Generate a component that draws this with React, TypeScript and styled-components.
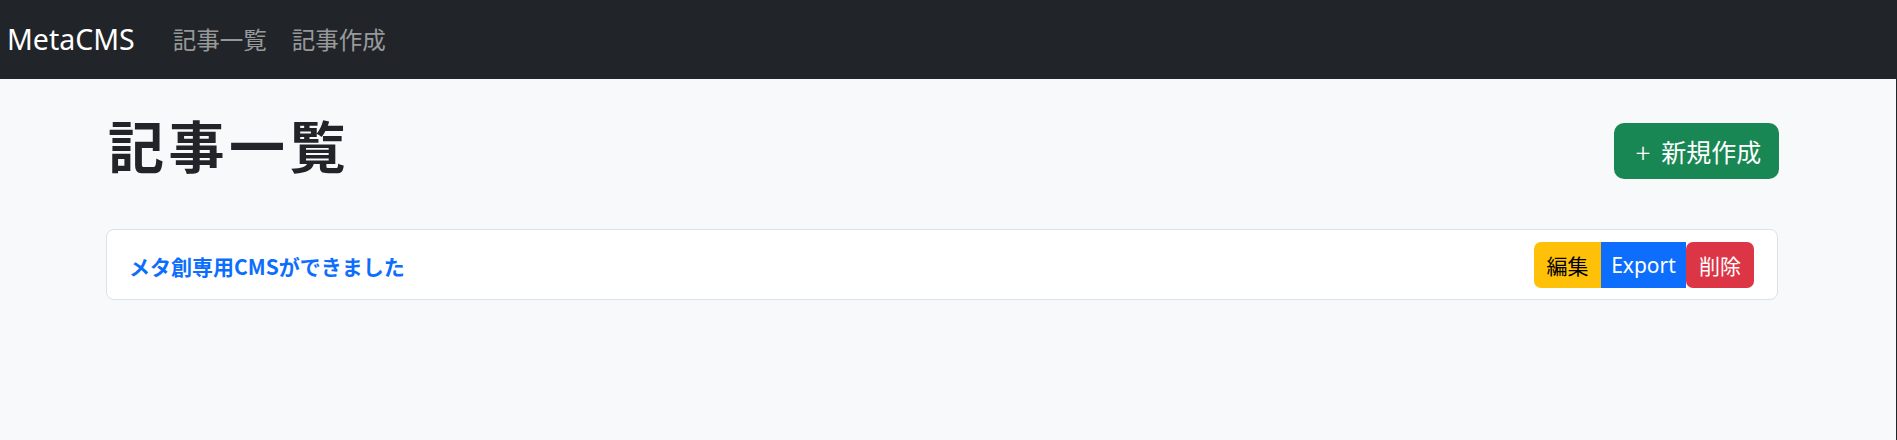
import React from "react";
import styled, { createGlobalStyle } from "styled-components";

const GlobalStyle = createGlobalStyle`
  html, body {
    margin: 0;
    padding: 0;
    background: #212529;
  }
  body {
    font-family: "Noto Sans", "Noto Sans CJK JP", sans-serif;
    color: #212529;
  }
  * { box-sizing: border-box; }
`;

const Page = styled.div`
  min-height: 100vh;
  display: flex;
  flex-direction: column;
`;

const NavBar = styled.nav`
  height: 79px;
  background: #212529;
  display: flex;
  align-items: center;
  padding-left: 7px;
`;

const Brand = styled.a`
  font-size: 28.5px;
  color: #ffffff;
  text-decoration: none;
  margin-right: 38px;
  line-height: 1;
`;

const NavLinks = styled.div`
  display: flex;
  gap: 25px;
`;

const NavLink = styled.a`
  font-size: 23.5px;
  color: rgba(255, 255, 255, 0.55);
  text-decoration: none;
  line-height: 1;
  padding-top: 2px;
`;

const Main = styled.main`
  flex: 1;
  background: #f8f9fa;
  margin-right: 1px;
  padding: 31px 0 0 106px;
`;

const Container = styled.div`
  width: 1672px;
`;

const HeaderRow = styled.div`
  display: flex;
  justify-content: space-between;
  align-items: flex-start;
  padding-left: 2px;
  margin-bottom: 50px;
`;

const Title = styled.h1`
  margin: 0;
  font-size: 56px;
  font-weight: 700;
  line-height: 67px;
  font-family: "Noto Sans CJK JP", sans-serif;
  letter-spacing: 4.5px;
`;

const PrimaryButton = styled.button`
  height: 56px;
  width: 165px;
  margin-right: -1px;
  margin-top: 13px;
  background: #198754;
  color: #ffffff;
  border: none;
  border-radius: 10px;
  font-family: "Noto Sans CJK JP", sans-serif;
  font-size: 25px;
  display: flex;
  align-items: center;
  justify-content: center;
  gap: 11px;
  padding: 0 0 0 4px;
`;

const Plus = styled.span`
  font-size: 27px;
  font-weight: 300;
`;

const Card = styled.div`
  height: 71px;
  background: #ffffff;
  border: 1px solid #dee2e6;
  border-radius: 8px;
  display: flex;
  align-items: center;
  justify-content: space-between;
  padding: 0 23px 0 24px;
`;

const ArticleLink = styled.a`
  color: #0d6efd;
  font-size: 21px;
  font-weight: 600;
  text-decoration: none;
  font-family: "Noto Sans CJK JP", sans-serif;
  margin-left: -2px;
  margin-top: 2px;
`;

const Actions = styled.div`
  display: flex;
`;

type Variant = "warning" | "primary" | "danger";

const variantStyles: Record<Variant, { bg: string; fg: string; radius: string }> = {
  warning: { bg: "#ffc107", fg: "#000000", radius: "7px 0 0 7px" },
  primary: { bg: "#0d6efd", fg: "#ffffff", radius: "0" },
  danger: { bg: "#dc3545", fg: "#ffffff", radius: "7px" },
};

const ActionButton = styled.button<{ $variant: Variant; $w: number }>`
  height: 46px;
  width: ${(p) => p.$w}px;
  border: none;
  padding: 0;
  font-family: "Noto Sans", "Noto Sans CJK JP", sans-serif;
  font-size: 21px;
  background: ${(p) => variantStyles[p.$variant].bg};
  color: ${(p) => variantStyles[p.$variant].fg};
  border-radius: ${(p) => variantStyles[p.$variant].radius};
`;

export default function App() {
  return (
    <>
      <GlobalStyle />
      <Page>
        <NavBar>
          <Brand href="#">MetaCMS</Brand>
          <NavLinks>
            <NavLink href="#">記事一覧</NavLink>
            <NavLink href="#">記事作成</NavLink>
          </NavLinks>
        </NavBar>
        <Main>
          <Container>
            <HeaderRow>
              <Title>記事一覧</Title>
              <PrimaryButton>
                <Plus>+</Plus>
                <span>新規作成</span>
              </PrimaryButton>
            </HeaderRow>
            <Card>
              <ArticleLink href="#">メタ創専用CMSができました</ArticleLink>
              <Actions>
                <ActionButton $variant="warning" $w={67}>編集</ActionButton>
                <ActionButton $variant="primary" $w={85}>Export</ActionButton>
                <ActionButton $variant="danger" $w={68}>削除</ActionButton>
              </Actions>
            </Card>
          </Container>
        </Main>
      </Page>
    </>
  );
}
